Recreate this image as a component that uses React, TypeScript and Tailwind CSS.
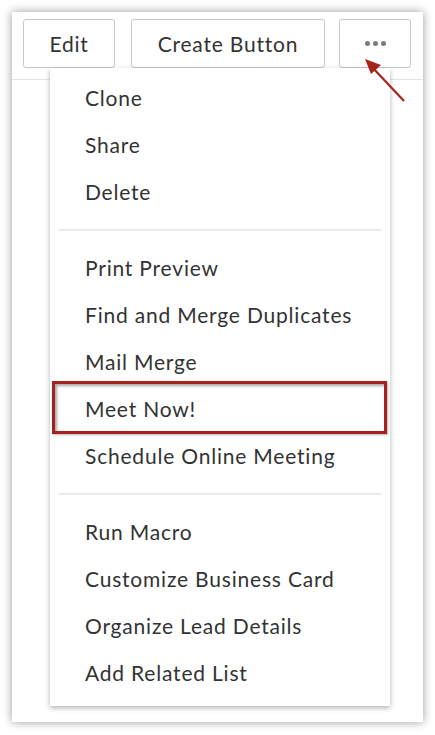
import React from "react";

const groups: string[][] = [
    ["Clone", "Share", "Delete"],
    ["Print Preview", "Find and Merge Duplicates", "Mail Merge", "Meet Now!", "Schedule Online Meeting"],
    ["Run Macro", "Customize Business Card", "Organize Lead Details", "Add Related List"],
];

function MenuItem(prop: {label: string}) {
    const highlighted = prop.label === "Meet Now!";
    return (
        <div className="relative h-[47px] flex items-center pl-[35px] text-[21px] tracking-[0.8px] text-[#333333]">
            {highlighted && (
                <div className="absolute -top-[4px] -bottom-[2px] left-[2px] right-[3px] border-[3px] border-[#a5221d] shadow-[inset_2px_2px_3px_rgba(0,0,0,0.35),1px_1px_2px_rgba(0,0,0,0.3)]" />
            )}
            <span className="relative">{prop.label}</span>
        </div>
    );
}

export default function App() {
    return (
        <div className="w-[435px] h-[735px] bg-white p-[12px] pb-[13px]" style={{fontFamily: "Lato, 'Open Sans', sans-serif"}}>
            <div className="relative w-[411px] h-[710px] bg-white shadow-[0_0_9px_rgba(0,0,0,0.4)]">
                <div className="flex pl-[11px] pt-[7px] h-[68px] border-b border-[#e4e4e4]">
                    <button className="w-[92px] h-[49px] border border-[#c8c8c8] rounded-[3px] text-[21px] tracking-[0.8px] text-[#333]">Edit</button>
                    <button className="ml-[16px] w-[194px] h-[49px] border border-[#c8c8c8] rounded-[3px] text-[21px] tracking-[0.8px] text-[#333]">Create Button</button>
                    <button className="ml-[14px] w-[72px] h-[49px] border border-[#c8c8c8] rounded-[3px] flex items-center justify-center gap-[3px]">
                        <span className="w-[5px] h-[5px] rounded-full bg-[#7a7a7a]" />
                        <span className="w-[5px] h-[5px] rounded-full bg-[#7a7a7a]" />
                        <span className="w-[5px] h-[5px] rounded-full bg-[#7a7a7a]" />
                    </button>
                </div>

                <div className="absolute left-[38px] top-[56px] w-[340px] h-[638px] bg-white shadow-[0_2px_5px_rgba(0,0,0,0.3)] pt-[6px]">
                    {groups.map((group, gi) => (
                        <div key={gi}>
                            {gi > 0 && (
                                <div className="h-[29px] flex items-center px-[8px]">
                                    <div className="w-full h-[2px] bg-[#ececec]" />
                                </div>
                            )}
                            {group.map((label) => (
                                <MenuItem key={label} label={label} />
                            ))}
                        </div>
                    ))}
                </div>

                <svg className="absolute left-0 top-0 pointer-events-none" width="411" height="120" viewBox="0 0 411 120">
                    <line x1="392" y1="89" x2="360" y2="55" stroke="#a8221c" strokeWidth="2.2" />
                    <polygon points="353,47 369,53 359,62" fill="#a8221c" />
                </svg>
            </div>
        </div>
    );
}
